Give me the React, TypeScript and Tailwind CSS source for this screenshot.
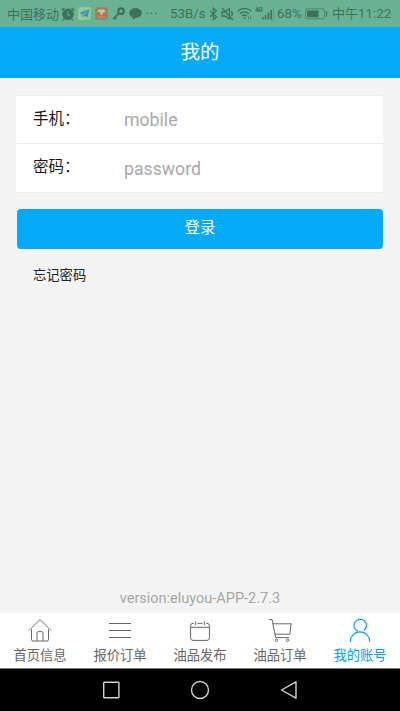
import React from 'react';

const FONT = "font-['Roboto','Noto_Sans_CJK_SC',sans-serif]";

function StatusBar() {
  return (
    <div className="flex h-[27px] items-center bg-[#69b393] pl-[7px] text-[13px] leading-none whitespace-nowrap text-[#3f705c]">
      <span className="w-[54px] shrink-0 pt-px">中国移动</span>
      <svg className="mr-[3px] h-[14px] w-[14px] shrink-0" viewBox="0 0 14 14" fill="none" stroke="currentColor">
        <circle cx="7" cy="7.3" r="5.8" fill="currentColor" stroke="none" />
        <path d="M.8 3.4 3.4 1M13.2 3.4 10.6 1" strokeWidth="1.6" />
        <path d="M3 12l-1 1.5M11 12l1 1.5" strokeWidth="1.3" />
        <path d="M7 4.2V8l2.4 1" stroke="#69b393" strokeWidth="1" />
      </svg>
      <svg className="mr-[4px] h-[13px] w-[13px] shrink-0" viewBox="0 0 13 13">
        <rect width="12.5" height="12.5" x=".2" y=".2" rx="2.2" fill="#8fc99f" />
        <path d="M0 9 4 13H2Q0 13 0 11ZM8 0h3q2 0 2 2v3Z" fill="#b4c977" />
        <path d="M1.5 6 11.5 2 9.5 10.5 6.2 8.5 5 11 4.3 7.5Z" fill="#388faa" />
        <path d="M4.3 7.5 10 3.5 6.2 8.5" fill="#6bb8b5" />
      </svg>
      <svg className="mr-[4px] h-[13px] w-[13px] shrink-0" viewBox="0 0 13 13">
        <rect width="12.5" height="12.5" x=".2" y=".2" rx="2.2" fill="#b17559" />
        <path d="M2.5 4.5Q3 2 6 2.5 9.5 1.5 10.5 4.5L8 6 7.3 5.5V8H5.5V5.5Z" fill="#b7c9a5" />
        <path d="M3 10h2m1 0h1.5m1 0h1.5" stroke="#b7c9a5" strokeWidth=".8" />
      </svg>
      <svg className="mr-[4px] h-[13px] w-[13px] shrink-0" viewBox="0 0 13 13" fill="none" stroke="currentColor">
        <circle cx="9" cy="4.2" r="2.8" strokeWidth="2.2" />
        <path d="M7 6.3 1 12.2M2.5 10.5l1.7 1.7" strokeWidth="1.8" />
      </svg>
      <svg className="mr-[4px] h-[13px] w-[13px] shrink-0" viewBox="0 0 13 13" fill="currentColor">
        <ellipse cx="6.5" cy="6" rx="6.3" ry="5" />
        <path d="M3.5 9.5 4 12.8 8 10Z" />
      </svg>
      <svg className="mr-[13px] h-[3px] w-[11px] shrink-0" viewBox="0 0 11 3" fill="currentColor">
        <circle cx="1.2" cy="1.3" r=".9" /><circle cx="5.5" cy="1.3" r=".9" /><circle cx="9.8" cy="1.3" r=".9" />
      </svg>
      <span className="w-[39px] shrink-0 pt-px text-[13.3px]">53B/s</span>
      <svg className="mr-[3px] h-[14px] w-[9px] shrink-0" viewBox="0 0 9 14" fill="none" stroke="currentColor" strokeWidth="1.2">
        <path d="M1 4 7.5 10 4.4 12.8V1.2L7.5 4 1 10" />
      </svg>
      <svg className="mr-[3px] h-[14px] w-[13px] shrink-0" viewBox="0 0 13 14" fill="none" stroke="currentColor" strokeWidth="1.3">
        <path d="M1 5H4L8.5 1.5V12L4 9H1ZM1 1 12 13M10.3 4.2q1.8 2.2.3 4.8" />
      </svg>
      <svg className="mr-[3px] h-[13px] w-[15px] shrink-0" viewBox="0 0 15 13" fill="none" stroke="currentColor" strokeWidth="1.3">
        <path d="M.6 4.3Q7.5-1.6 14.4 4.3M2.8 6.7Q7.5 2.9 12.2 6.7M5 9Q7.5 7 10 9" />
        <circle cx="7.5" cy="11.3" r="1" fill="currentColor" stroke="none" />
        <path d="M11.5 9.5v3M13.6 9.5v3" strokeWidth=".8" />
      </svg>
      <span className="h-[13px] w-[7px] shrink-0 text-[6.5px] font-bold tracking-[-0.5px]">4G</span>
      <svg className="mr-[3px] h-[13px] w-[12px] shrink-0" viewBox="0 0 12 13" fill="currentColor">
        <path d="M0 10h1.6v2.5H0ZM2.8 8h1.6v4.5H2.8ZM5.6 5.5h1.6v7H5.6ZM8.4 3H10v9.5H8.4Z" />
        <path d="M11.2.5h.8v12h-.8Z" opacity=".45" />
      </svg>
      <span className="w-[28px] shrink-0 text-[13.3px]">68%</span>
      <svg className="mr-[4px] h-[12px] w-[23px] shrink-0" viewBox="0 0 23 12">
        <rect x=".5" y=".8" width="19" height="10" rx="1.3" fill="none" stroke="currentColor" strokeOpacity=".65" />
        <rect x="2" y="2.5" width="11.5" height="6.8" fill="currentColor" />
        <path d="M21.5 3.3v5" stroke="currentColor" strokeWidth="1.3" />
      </svg>
      <span className="pt-px text-[13px]">中午<span className="text-[13.3px]">11:22</span></span>
    </div>
  );
}

function Field({ label, placeholder, type }: { label: string; placeholder: string; type: string }) {
  return (
    <label className="flex h-[48px] items-center">
      <span className="w-[107px] pl-[16px] text-[15.5px] leading-none text-[#181818]">{label}</span>
      <input
        type={type}
        placeholder={placeholder}
        className="min-w-0 flex-1 bg-transparent pt-px text-[17.7px] leading-none text-[#333] outline-none placeholder:text-[#a9a9a9]"
      />
    </label>
  );
}

const tabs = [
  {
    label: '首页信息',
    icon: <path d="M1 12.5 12 1.5 23 12.5M3.5 11.5V21.5Q3.5 23 5 23H19Q20.5 23 20.5 21.5V11.5M9 23V15Q9 13.6 10.4 13.6H13.6Q15 13.6 15 15V23" />,
  },
  { label: '报价订单', icon: <path d="M1 5.5H23M1 12.5H23M1 19.5H23" /> },
  {
    label: '油品发布',
    icon: (
      <>
        <path d="M5.8 5.3H5Q2.6 5.3 2.6 7.7V19.9Q2.6 22.4 5 22.4H19Q21.4 22.4 21.4 19.9V7.7Q21.4 5.3 19 5.3H18.2M9.4 5.3H14.6" />
        <path d="M2.6 9.3H21.4M7.6 3.3V7M16.4 3.3V7" />
      </>
    ),
  },
  {
    label: '油品订单',
    icon: (
      <>
        <path d="M1.2 1.5H4L7.7 19.6H21.2M5 5.8H23.2L21.8 16.2H7" />
        <circle cx="8.4" cy="22.3" r="1.2" />
        <circle cx="19.6" cy="22.3" r="1.2" />
      </>
    ),
  },
  {
    label: '我的账号',
    active: true,
    icon: <path d="M9.8 13.3A6.2 6.2 0 1 1 16 12.5M2.2 24C2.4 18 6.5 13.8 12 13.8S21.6 18 21.8 24" strokeWidth="1.15" />,
  },
];

export default function App() {
  return (
    <div className={`flex h-[711px] w-[400px] flex-col overflow-hidden bg-[#f4f4f4] ${FONT}`}>
      <StatusBar />
      <header className="flex h-[51px] items-center justify-center bg-[#04a9f8] text-[19.5px] leading-none text-white">我的</header>
      <main className="flex flex-1 flex-col px-[17px] pt-[17px]">
        <div className="-ml-px divide-y divide-[#ececec] border-y border-[#ececec] bg-white pl-px">
          <Field label="手机：" placeholder="mobile" type="text" />
          <Field label="密码：" placeholder="password" type="password" />
        </div>
        <button className="mt-[16px] h-[40px] rounded-[4px] bg-[#04a9f8] text-[15.5px] leading-none text-white">登录</button>
        <a className="mt-[20px] pl-[16px] text-[13.3px] leading-[14px] text-[#222]">忘记密码</a>
        <div className="mt-auto pb-[6px] text-center text-[14.5px] leading-[16px] text-[#a6a6a6]">version:eluyou-APP-2.7.3</div>
      </main>
      <nav className="grid h-[55px] grid-cols-5 bg-white">
        {tabs.map((t) => (
          <div key={t.label} className={`flex flex-col items-center pt-[5px] ${t.active ? 'text-[#04a1ef]' : 'text-[#666]'}`}>
            <svg className="h-[24px] w-[24px]" viewBox="0 0 24 24" fill="none" stroke="currentColor" strokeWidth="1">
              {t.icon}
            </svg>
            <span className="mt-[6px] text-[13.3px] leading-[16px]">{t.label}</span>
          </div>
        ))}
      </nav>
      <footer className="flex h-[43px] items-center justify-center gap-[69px] border-t border-[#777] bg-black text-[#d2d2d2]">
        <svg className="h-[20px] w-[20px]" viewBox="0 0 20 20" fill="none" stroke="currentColor" strokeWidth="1.4"><rect x="2.7" y="2.2" width="15.2" height="15.6" rx=".6" /></svg>
        <svg className="h-[20px] w-[20px]" viewBox="0 0 20 20" fill="none" stroke="currentColor" strokeWidth="1.4"><circle cx="10" cy="10" r="8.5" /></svg>
        <svg className="h-[20px] w-[20px]" viewBox="0 0 20 20" fill="none" stroke="currentColor" strokeWidth="1.4" strokeLinejoin="round"><path d="M17 1.8V18.2L2.5 10Z" /></svg>
      </footer>
    </div>
  );
}
